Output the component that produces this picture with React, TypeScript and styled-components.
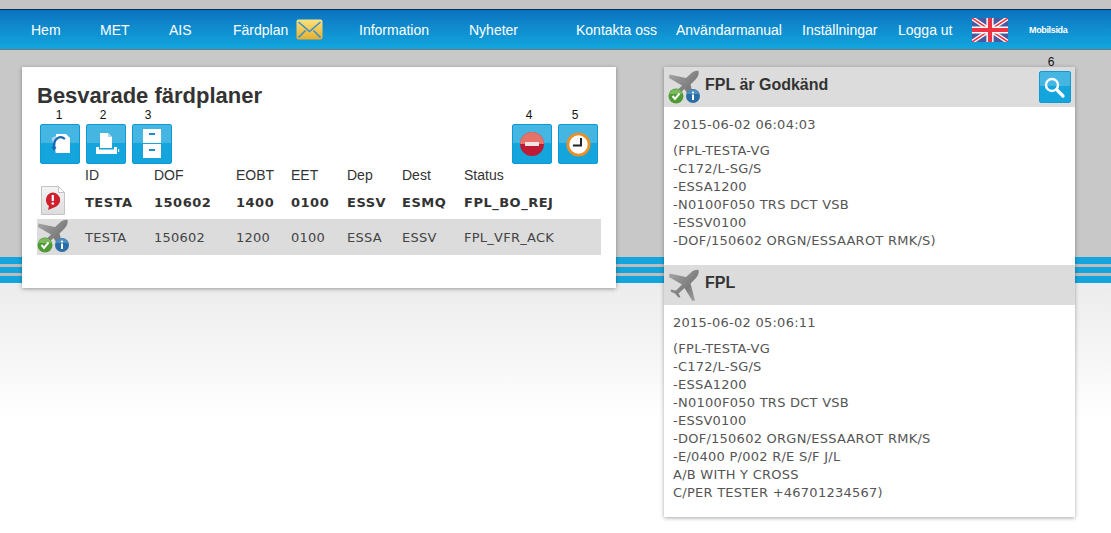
import React from "react";
import styled, { createGlobalStyle } from "styled-components";

const Global = createGlobalStyle`
  html, body { margin: 0; padding: 0; }
  body { font-family: "Liberation Sans", Arial, sans-serif; color: #333; }
`;

const Page = styled.div`
  width: 1111px;
  height: 533px;
  overflow: hidden;
  background: linear-gradient(
    to bottom,
    #c8c8c8 0, #c8c8c8 257px,
    #13a5dc 257px, #13a5dc 264px,
    #bdbdbd 264px, #bdbdbd 267px,
    #13a5dc 267px, #13a5dc 273px,
    #bdbdbd 273px, #bdbdbd 276px,
    #13a5dc 276px, #13a5dc 283px,
    #ececec 283px, #ffffff 420px
  );
`;

const TopStrip = styled.div`
  height: 9px;
  background: #c4c4c4;
`;

const Nav = styled.nav`
  height: 39px;
  border-top: 1px solid #04304f;
  border-bottom: 1px solid #6f7a80;
  background: linear-gradient(to bottom, #0a72bf 0, #0f88cc 40%, #12a6de 100%);
  display: flex;
  align-items: center;
  padding-left: 31px;
  font-size: 14px;
  color: #fff;
`;

const NavLink = styled.span<{ $w: number }>`
  width: ${(p) => p.$w}px;
  flex: none;
  display: flex;
  align-items: center;
  white-space: nowrap;
`;

const SmallLink = styled.span`
  font-size: 9px;
  font-weight: bold;
  letter-spacing: -0.35px;
  margin-left: 21px;
`;

const Main = styled.main`
  display: flex;
  align-items: flex-start;
  gap: 48px;
  padding: 17px 0 0 22px;
`;

const LeftCard = styled.section`
  width: 594px;
  height: 221px;
  box-sizing: border-box;
  padding: 16px 15px 0;
  background: #fff;
  box-shadow: 0 1px 4px rgba(0, 0, 0, 0.35);
`;

const Title = styled.h1`
  margin: 0;
  font-size: 22px;
  line-height: 25px;
  font-weight: bold;
  color: #333;
`;

const Toolbar = styled.div`
  display: flex;
  justify-content: space-between;
  padding: 16px 3px 0;
`;

const ButtonGroup = styled.div`
  display: flex;
  gap: 6px;
`;

const IconButton = styled.button<{ $size?: number }>`
  position: relative;
  width: ${(p) => p.$size ?? 40}px;
  height: ${(p) => p.$size ?? 40}px;
  padding: 0;
  border: 1px solid #0f9ad6;
  border-radius: 2px;
  background: linear-gradient(to bottom, #45b6e2 0, #45b6e2 47%, #13a5dc 47%, #13a5dc 100%);
  display: flex;
  align-items: center;
  justify-content: center;
`;

const Num = styled.span<{ $dx: number }>`
  position: absolute;
  top: -17px;
  left: 0;
  right: 0;
  margin-left: ${(p) => p.$dx}px;
  text-align: center;
  font-size: 12px;
  line-height: 14px;
  color: #111;
`;

const Grid = styled.div<{ $h: number; $shade?: boolean; $bold?: boolean; $head?: boolean }>`
  display: grid;
  grid-template-columns: 48px 69px 82px 55px 56px 55px 62px 1fr;
  align-items: center;
  box-sizing: border-box;
  height: ${(p) => p.$h}px;
  padding-bottom: ${(p) => (p.$shade ? 1 : 0)}px;
  background: ${(p) => (p.$shade ? "#dcdcdc" : "transparent")};
  font-family: ${(p) => (p.$head ? '"Liberation Sans", Arial, sans-serif' : '"DejaVu Sans", Verdana, sans-serif')};
  font-size: ${(p) => (p.$head ? 14 : 13)}px;
  font-weight: ${(p) => (p.$bold ? "bold" : "normal")};
  letter-spacing: ${(p) => (p.$head ? 0 : p.$bold ? 0.5 : 0.25)}px;
  color: ${(p) => (p.$bold || p.$head ? "#333" : "#444")};
`;

const RowIcon = styled.div`
  display: flex;
  align-items: center;
  margin-bottom: 3px;
`;

const Rows = styled.div`
  margin-top: 1px;
`;

const RightCard = styled.section`
  width: 411px;
  height: 450px;
  background: #fff;
  box-shadow: 0 1px 4px rgba(0, 0, 0, 0.35);
`;

const CardHead = styled.header`
  position: relative;
  height: 40px;
  background: #dcdcdc;
  display: flex;
  align-items: center;
  padding: 0 4px 0 4px;
  gap: 5px;
  font-size: 16px;
  font-weight: bold;
  color: #333;
`;

const HeadTitle = styled.span`
  flex: 1;
  margin-top: -4px;
`;

const Message = styled.div<{ $h: number }>`
  height: ${(p) => p.$h}px;
  box-sizing: border-box;
  padding: 9px 9px 0;
  font-family: "DejaVu Sans", Verdana, sans-serif;
  font-size: 13px;
  letter-spacing: 0.25px;
  line-height: 18px;
  color: #555;
`;

const Stamp = styled.div`
  margin-bottom: 8px;
`;

const Pre = styled.div`
  white-space: pre;
`;

const Plane = ({ s = 32 }: { s?: number }) => (
  <svg width={s} height={s} viewBox="0 0 32 32">
    <defs>
      <linearGradient id="pl" x1="0" y1="0" x2="1" y2="1">
        <stop offset="0" stopColor="#a8a8a8" />
        <stop offset="0.6" stopColor="#7c7c7c" />
        <stop offset="1" stopColor="#a8a8a8" />
      </linearGradient>
    </defs>
    <path
      fill="url(#pl)"
      d="M30.5 1c.8 2.5-.5 6-3 8.5l-5 5 4.5 17-2.5.5-8-13-6 5.5 2 3.5-2 .5-3.5-4-4-1.500-.5-2.500 5.500 1 6-6L1 8l.5-3.500L18 8l5-4.500C25 1.500 28 .5 30.500 1z"
    />
  </svg>
);

const StatusOverlay = styled.span`
  position: relative;
  display: block;
  width: 32px;
  height: 34px;
  flex: none;
`;

const Badges = styled.svg`
  position: absolute;
  left: 0;
  bottom: 0;
`;

const PlaneStatus = () => (
  <StatusOverlay>
    <Plane />
    <Badges width="32" height="16" viewBox="0 0 32 16">
      <circle cx="8" cy="8" r="7.5" fill="#4f9a34" />
      <path d="M1 6a7.5 7.5 0 0 1 14 0z" fill="#7ab95c" />
      <path d="M4.5 8l2.500 3 4.500-5.500" fill="none" stroke="#fff" strokeWidth="2" />
      <circle cx="25" cy="8" r="7" fill="#2a6ea8" />
      <path d="M18.500 6a7 7 0 0 1 13 0z" fill="#4f8fc0" />
      <circle cx="25" cy="4.500" r="1.100" fill="#fff" />
      <rect x="24" y="6.500" width="2" height="5.500" fill="#fff" />
    </Badges>
  </StatusOverlay>
);

const DocWrap = styled.svg`
  margin-left: 4px;
`;

const ErrorDoc = () => (
  <DocWrap width="24" height="29" viewBox="0 0 24 29">
    <defs>
      <linearGradient id="doc" x1="0" y1="0" x2="0" y2="1">
        <stop offset="0" stopColor="#f4f4f4" />
        <stop offset="1" stopColor="#dcdcdc" />
      </linearGradient>
    </defs>
    <path d="M.5.5h17l6 6v22H.5z" fill="url(#doc)" stroke="#c4c4c4" />
    <path d="M17.500.5v6h6z" fill="#fff" stroke="#c4c4c4" />
    <path d="M11.700 6.500a7.500 7.500 0 0 1 2 14.700L7 24l1-4a7.500 7.500 0 0 1 3.700-13.500z" fill="#cf2030" />
    <rect x="10.700" y="9" width="2.200" height="6" fill="#fff" />
    <circle cx="11.800" cy="17.500" r="1.300" fill="#fff" />
  </DocWrap>
);

const EnvelopeSvg = styled.svg`
  margin-left: 8px;
`;

const Envelope = () => (
  <EnvelopeSvg width="27" height="21" viewBox="0 0 27 21">
    <defs>
      <linearGradient id="env" x1="0" y1="0" x2="0" y2="1">
        <stop offset="0" stopColor="#fbe27e" />
        <stop offset="1" stopColor="#e6ae2e" />
      </linearGradient>
    </defs>
    <rect x="0.500" y="0.500" width="26" height="20" rx="2" fill="url(#env)" />
    <path d="M2.500 3l11 9.500L24.500 3M2.500 18.500l7-7M24.500 18.500l-7-7" fill="none" stroke="#3a8fc8" strokeWidth="1.600" />
  </EnvelopeSvg>
);

const Flag = () => (
  <svg width="36" height="24" viewBox="0 0 60 40">
    <rect width="60" height="40" fill="#4a5aa0" />
    <path d="M0 0l60 40M60 0L0 40" stroke="#fff" strokeWidth="7" />
    <path d="M0 0l60 40M60 0L0 40" stroke="#ef3340" strokeWidth="2.500" />
    <path d="M30 0v40M0 20h60" stroke="#fff" strokeWidth="12" />
    <path d="M30 0v40M0 20h60" stroke="#ef3340" strokeWidth="7" />
  </svg>
);

const Reload = () => (
  <svg width="30" height="30" viewBox="0 0 30 30">
    <path d="M6.500 9L13 6v18h-2.500z" fill="#a9d6ee" />
    <path d="M11 5h10l4 4v15H11z" fill="#fff" />
    <path d="M9 19C8 11 14 5 20 10" fill="none" stroke="#1668b4" strokeWidth="2.200" />
    <path d="M6.500 18l2.500 4 2.500-4z" fill="#1668b4" />
  </svg>
);

const Printer = () => (
  <svg width="30" height="30" viewBox="0 0 30 30">
    <path d="M9 4h8l4 4v11H9z" fill="#fff" />
    <path d="M17 4v4h4z" fill="#a9d6ee" />
    <path d="M5 18h3v2.500h15V18h3v7H5z" fill="#fff" />
    <rect x="27" y="20" width="1.200" height="3" fill="#d8eef8" />
  </svg>
);

const Cabinet = () => (
  <svg width="30" height="34" viewBox="0 0 30 34">
    <rect x="6" y="2" width="18" height="14" fill="#fff" />
    <rect x="6" y="17" width="18" height="14" fill="#fff" />
    <rect x="12" y="6" width="6" height="2" fill="#1a8fd0" />
    <rect x="12" y="22" width="6" height="2" fill="#1a8fd0" />
  </svg>
);

const StopIcon = () => (
  <svg width="24" height="24" viewBox="0 0 24 24">
    <circle cx="12" cy="12" r="12" fill="#bd1c34" />
    <path d="M0 12a12 12 0 0 1 24 0z" fill="#e5736a" />
    <rect x="5" y="10" width="14" height="4" fill="#f6e4e4" />
  </svg>
);

const ClockIcon = () => (
  <svg width="25" height="25" viewBox="0 0 25 25">
    <circle cx="12.500" cy="12.500" r="10.600" fill="#fff" stroke="#ea9028" strokeWidth="2.800" />
    <path d="M15 6v7.500H7" fill="none" stroke="#222" strokeWidth="2" />
  </svg>
);

const Search = () => (
  <svg width="26" height="26" viewBox="0 0 26 26">
    <circle cx="10" cy="11" r="6" fill="none" stroke="#fff" strokeWidth="2.400" />
    <path d="M14.500 15.500L21 22" stroke="#fff" strokeWidth="3.200" strokeLinecap="round" />
  </svg>
);

const head = ["ID", "DOF", "EOBT", "EET", "Dep", "Dest", "Status"];
const r1 = ["TESTA", "150602", "1400", "0100", "ESSV", "ESMQ", "FPL_BO_REJ"];
const r2 = ["TESTA", "150602", "1200", "0100", "ESSA", "ESSV", "FPL_VFR_ACK"];

const msg1 = `(FPL-TESTA-VG
-C172/L-SG/S
-ESSA1200
-N0100F050 TRS DCT VSB
-ESSV0100
-DOF/150602 ORGN/ESSAAROT RMK/S)`;

const msg2 = `(FPL-TESTA-VG
-C172/L-SG/S
-ESSA1200
-N0100F050 TRS DCT VSB
-ESSV0100
-DOF/150602 ORGN/ESSAAROT RMK/S
-E/0400 P/002 R/E S/F J/L
A/B WITH Y CROSS
C/PER TESTER +46701234567)`;

export default function App() {
  return (
    <Page>
      <Global />
      <TopStrip />
      <Nav>
        <NavLink $w={69}>Hem</NavLink>
        <NavLink $w={69}>MET</NavLink>
        <NavLink $w={64}>AIS</NavLink>
        <NavLink $w={126}>
          Färdplan
          <Envelope />
        </NavLink>
        <NavLink $w={110}>Information</NavLink>
        <NavLink $w={107}>Nyheter</NavLink>
        <NavLink $w={100}>Kontakta oss</NavLink>
        <NavLink $w={126}>Användarmanual</NavLink>
        <NavLink $w={96}>Inställningar</NavLink>
        <NavLink $w={74}>Logga ut</NavLink>
        <Flag />
        <SmallLink>Mobilsida</SmallLink>
      </Nav>
      <Main>
        <LeftCard>
          <Title>Besvarade färdplaner</Title>
          <Toolbar>
            <ButtonGroup>
              <IconButton>
                <Num $dx={-2}>1</Num>
                <Reload />
              </IconButton>
              <IconButton>
                <Num $dx={-6}>2</Num>
                <Printer />
              </IconButton>
              <IconButton>
                <Num $dx={-8}>3</Num>
                <Cabinet />
              </IconButton>
            </ButtonGroup>
            <ButtonGroup>
              <IconButton>
                <Num $dx={-6}>4</Num>
                <StopIcon />
              </IconButton>
              <IconButton>
                <Num $dx={-6}>5</Num>
                <ClockIcon />
              </IconButton>
            </ButtonGroup>
          </Toolbar>
          <Rows>
            <Grid $h={20} $head>
              <span />
              {head.map((t) => (
                <span key={t}>{t}</span>
              ))}
            </Grid>
            <Grid $h={34} $bold>
              <RowIcon>
                <ErrorDoc />
              </RowIcon>
              {r1.map((t, i) => (
                <span key={i}>{t}</span>
              ))}
            </Grid>
            <Grid $h={36} $shade>
              <RowIcon>
                <PlaneStatus />
              </RowIcon>
              {r2.map((t, i) => (
                <span key={i}>{t}</span>
              ))}
            </Grid>
          </Rows>
        </LeftCard>
        <RightCard>
          <CardHead>
            <PlaneStatus />
            <HeadTitle>FPL är Godkänd</HeadTitle>
            <IconButton $size={32}>
              <Num $dx={-8}>6</Num>
              <Search />
            </IconButton>
          </CardHead>
          <Message $h={158}>
            <Stamp>2015-06-02 06:04:03</Stamp>
            <Pre>{msg1}</Pre>
          </Message>
          <CardHead>
            <Plane />
            <HeadTitle>FPL</HeadTitle>
          </CardHead>
          <Message $h={212}>
            <Stamp>2015-06-02 05:06:11</Stamp>
            <Pre>{msg2}</Pre>
          </Message>
        </RightCard>
      </Main>
    </Page>
  );
}
